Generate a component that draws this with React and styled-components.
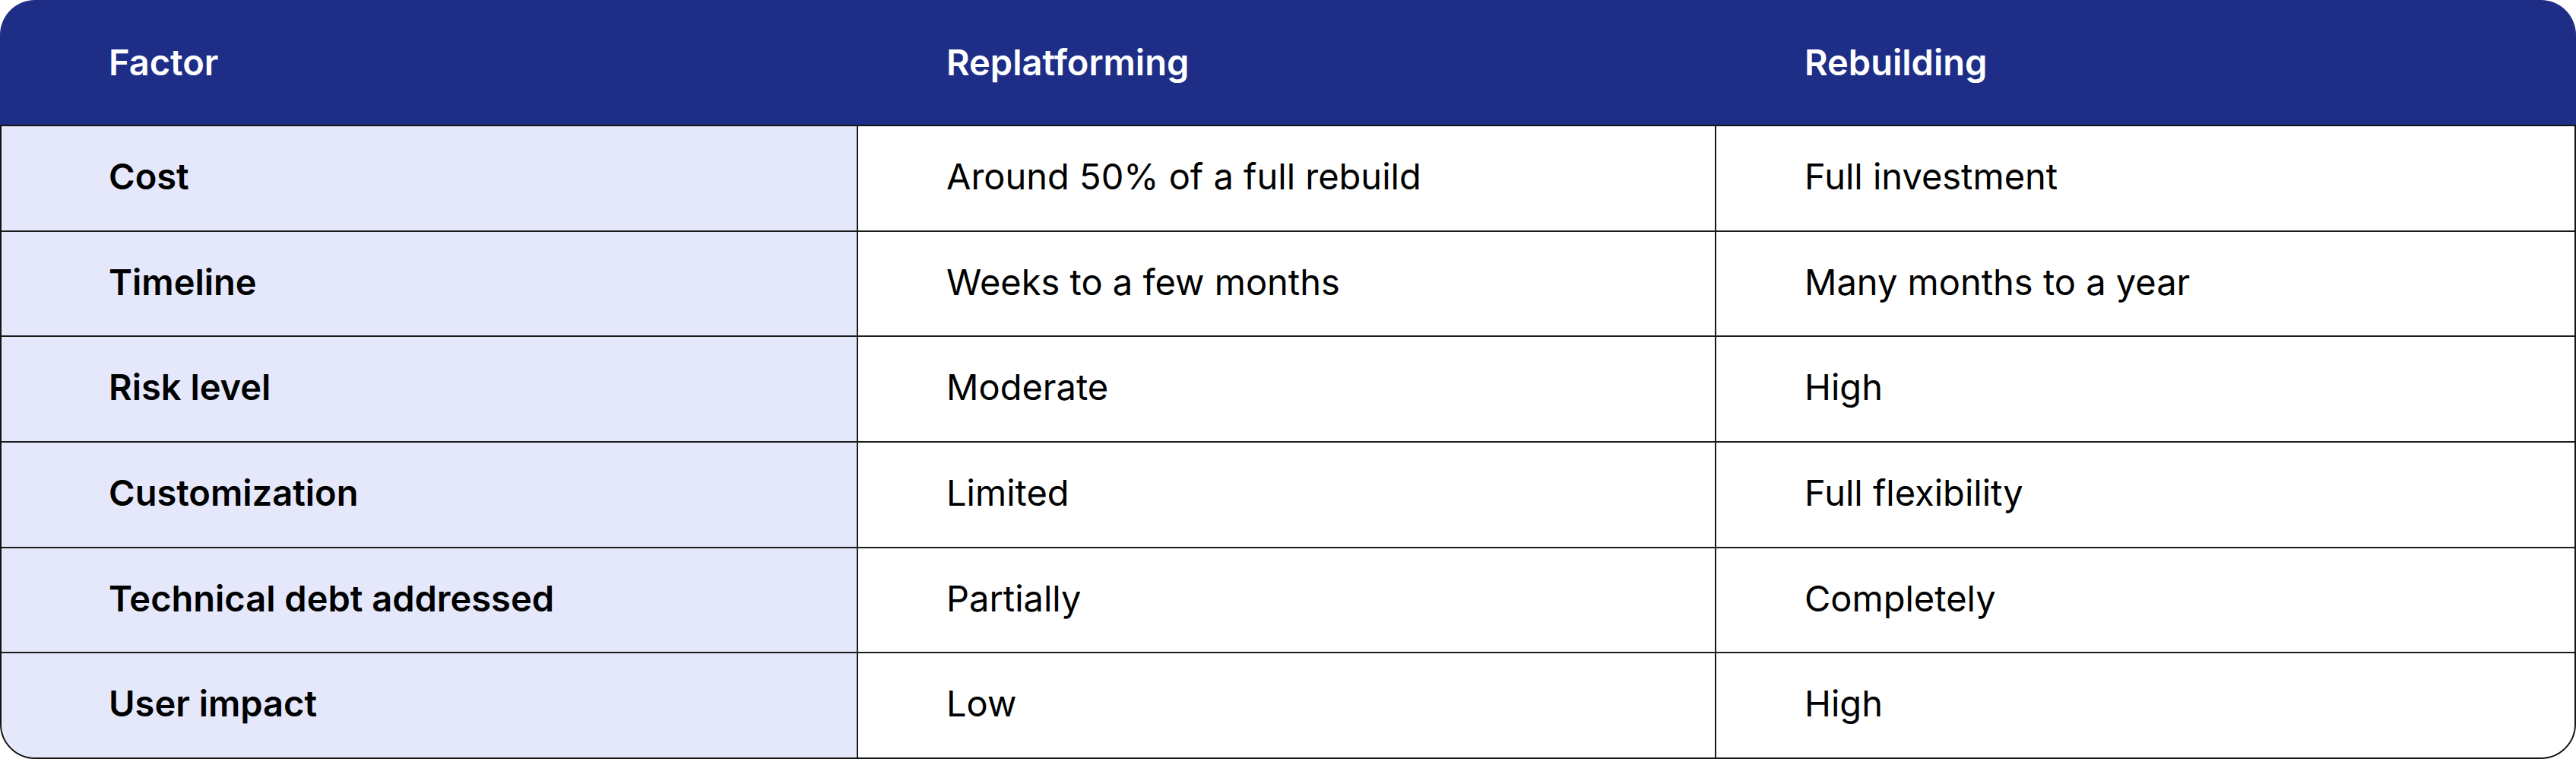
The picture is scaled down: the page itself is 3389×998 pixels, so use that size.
import React from 'react'
import styled, { createGlobalStyle } from 'styled-components'

const GlobalStyle = createGlobalStyle`
  html, body {
    margin: 0;
    padding: 0;
    background: #ffffff;
  }
  body {
    font-family: Inter, "Noto Sans", "Liberation Sans", sans-serif;
  }
`

const rows = [
  { factor: "Cost", replat: "Around 50% of a full rebuild", rebuild: "Full investment" },
  { factor: "Timeline", replat: "Weeks to a few months", rebuild: "Many months to a year" },
  { factor: "Risk level", replat: "Moderate", rebuild: "High" },
  { factor: "Customization", replat: "Limited", rebuild: "Full flexibility" },
  { factor: "Technical debt addressed", replat: "Partially", rebuild: "Completely" },
  { factor: "User impact", replat: "Low", rebuild: "High" },
]

export default function App(){
  return (
    <>
      <GlobalStyle />
      <Table>
        <Head>
          <HeadCell first>Factor</HeadCell>
          <HeadCell>Replatforming</HeadCell>
          <HeadCell>Rebuilding</HeadCell>
        </Head>
        <Body>
          {rows.map((r, i) => (
            <Row key={r.factor} last={i === rows.length - 1}>
              <FactorCell>{r.factor}</FactorCell>
              <Cell>{r.replat}</Cell>
              <Cell end>{r.rebuild}</Cell>
            </Row>
          ))}
        </Body>
      </Table>
    </>
  )
}

const Table = styled.div`
  width: 3389px;
  height: 998px;
  display: flex;
  flex-direction: column;
  box-sizing: border-box;
`

const Head = styled.div`
  height: 164px;
  flex: 0 0 164px;
  display: grid;
  grid-template-columns: 1129px 1129px 1fr;
  background: #1e2e87;
  border-radius: 46px 46px 0 0;
`

const HeadCell = styled.div`
  display: flex;
  align-items: center;
  padding-left: ${p => p.first ? '143px' : '116px'};
  padding-bottom: 2px;
  color: #ffffff;
  font-size: 47px;
  font-weight: 600;
`

const Body = styled.div`
  flex: 1;
  display: flex;
  flex-direction: column;
  border: 2px solid #141414;
  border-radius: 0 0 46px 46px;
  overflow: hidden;
  box-sizing: border-box;
`

const Row = styled.div`
  flex: 1;
  display: grid;
  grid-template-columns: 1127px 1129px 1fr;
  border-bottom: ${p => p.last ? 'none' : '2px solid #1c1c1c'};
`

const Cell = styled.div`
  display: flex;
  align-items: center;
  padding-left: 116px;
  padding-bottom: 6px;
  background: #ffffff;
  color: #000000;
  font-size: 47px;
  font-weight: 400;
  border-right: ${p => p.end ? 'none' : '2px solid #1c1c1c'};
`

const FactorCell = styled(Cell)`
  padding-left: 141px;
  background: #e5e8fb;
  font-weight: 600;
`
